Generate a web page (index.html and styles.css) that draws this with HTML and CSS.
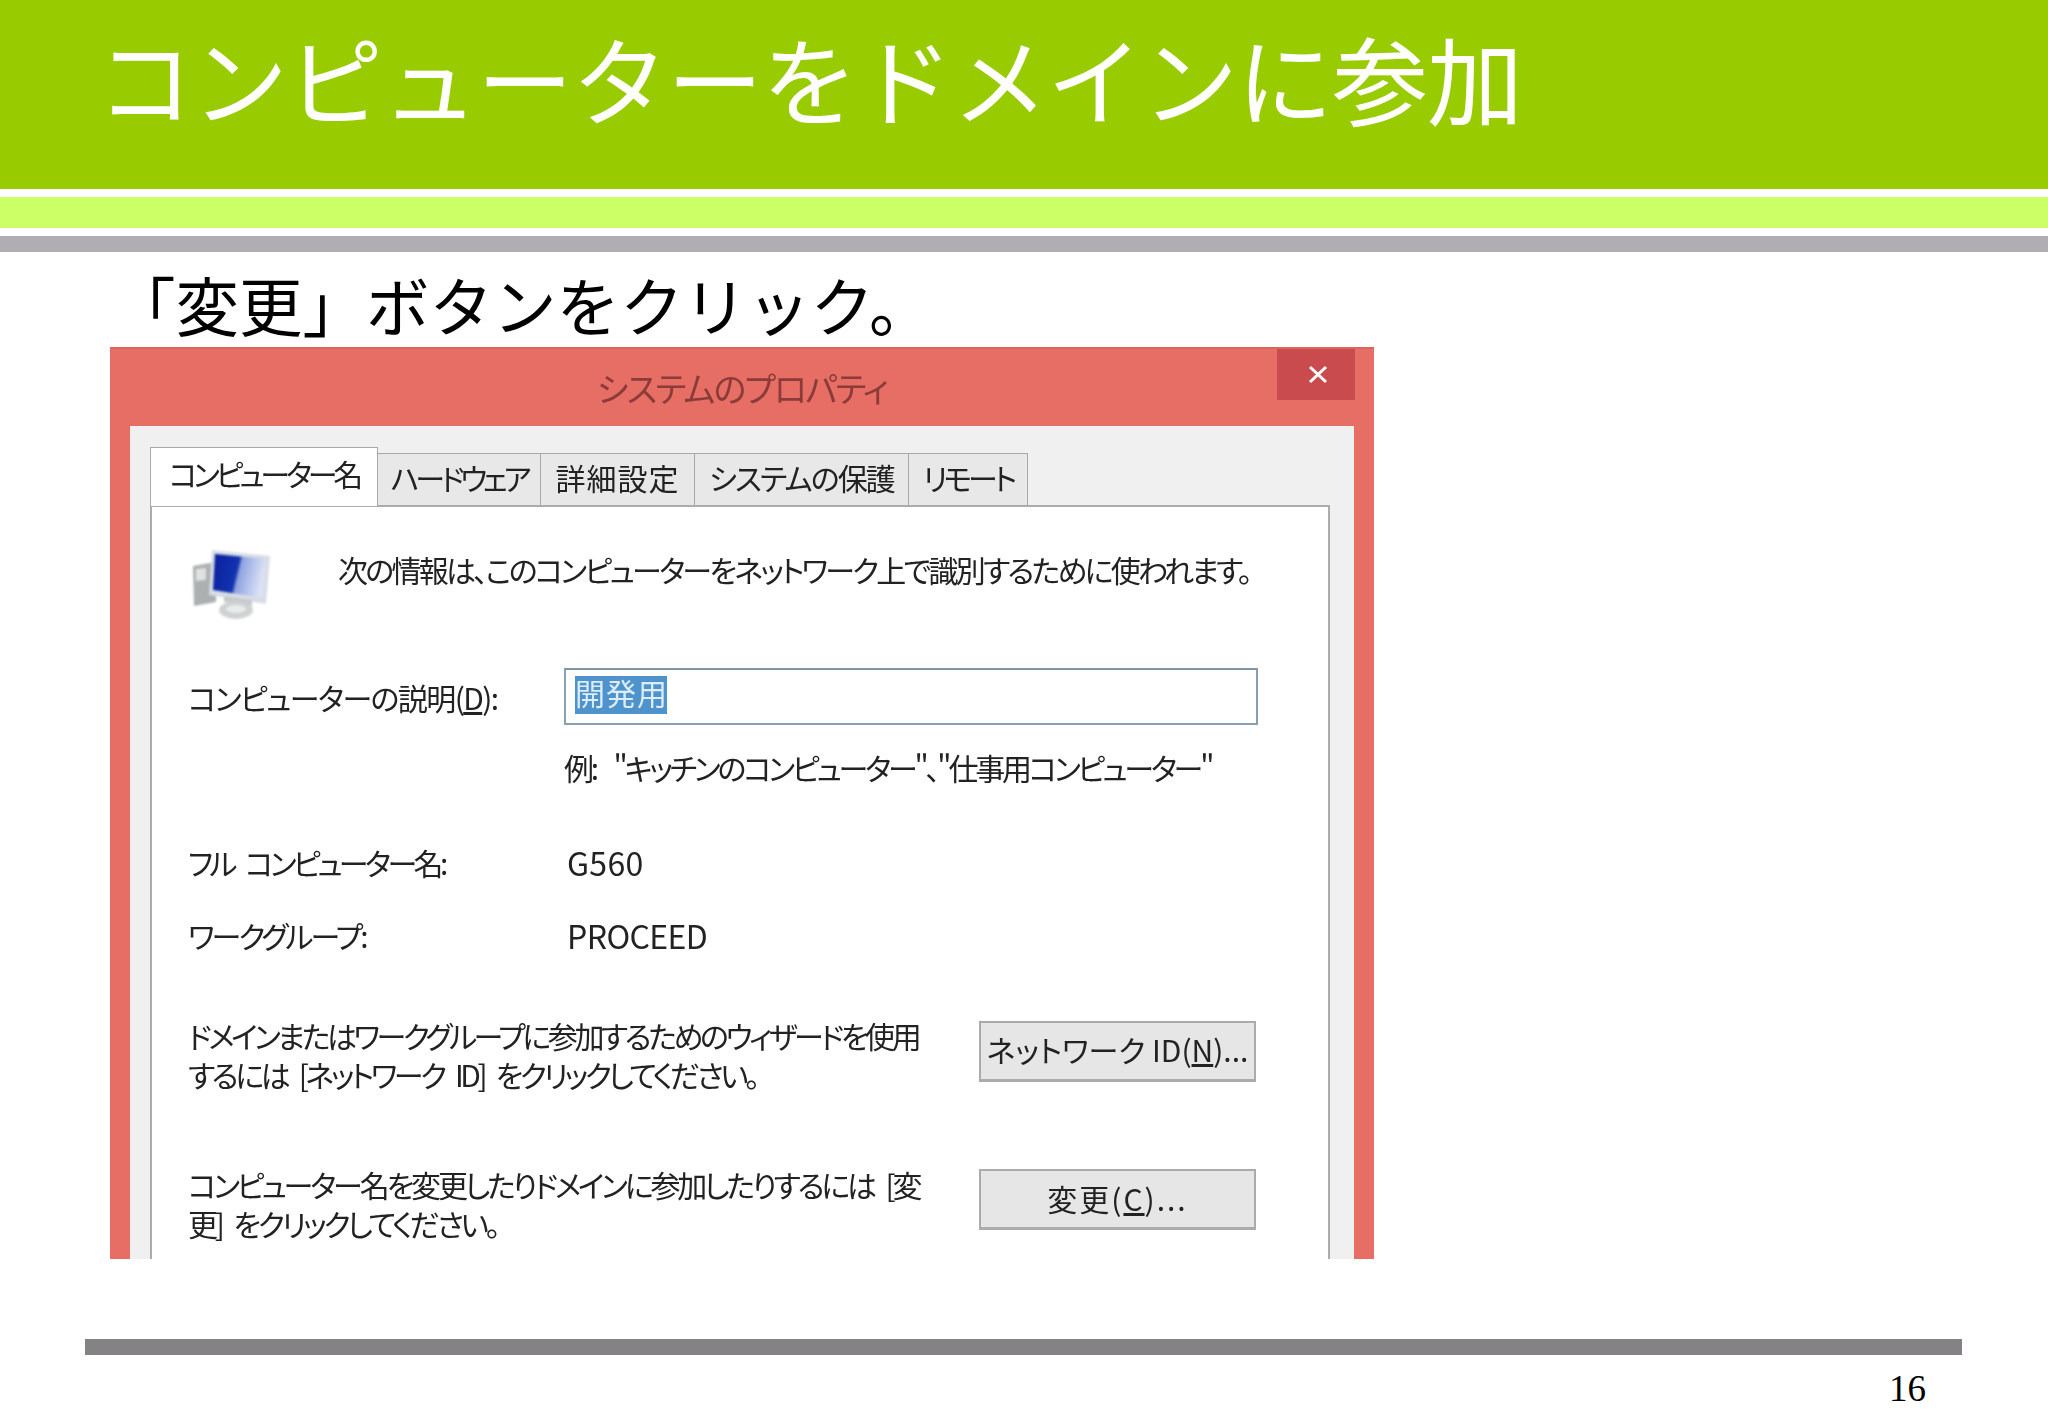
FILE: index.html
```html
<!DOCTYPE html>
<html lang="ja">
<head>
<meta charset="utf-8">
<title>コンピューターをドメインに参加</title>
<link rel="stylesheet" href="styles.css">
</head>
<body>
<div class="slide">
  <header class="head">
    <h1 class="title">コンピューターをドメインに参加</h1>
    <div class="band-light"></div>
    <div class="band-gray"></div>
  </header>
  <p class="lead">「変更」ボタンをクリック。</p>
  <div class="window">
    <div class="titlebar">
      <span class="wintitle">システムのプロパティ</span>
      <span class="close"><svg width="24" height="20" viewBox="0 0 24 20"><path d="M4 2 L20 17 M20 2 L4 17" stroke="#fff" stroke-width="3" fill="none"/></svg></span>
    </div>
    <div class="client">
      <div class="tabs">
        <span class="tab tab-active">コンピューター名</span>
        <span class="tab t2">ハードウェア</span>
        <span class="tab t3">詳細設定</span>
        <span class="tab t4">システムの保護</span>
        <span class="tab t5">リモート</span>
      </div>
      <div class="panel">
        <div class="info">
          <svg class="pc" width="78" height="74" viewBox="0 0 78 74">
            <defs>
              <linearGradient id="scr" x1="0" y1="0" x2="1" y2="0.2">
                <stop offset="0" stop-color="#0a1f9c"/>
                <stop offset="0.5" stop-color="#1233b0"/>
                <stop offset="0.56" stop-color="#8fa2e0"/>
                <stop offset="1" stop-color="#dbe2f5"/>
              </linearGradient>
            </defs>
            <polygon points="1,18 24,14 24,54 2,58" fill="#acb0b0"/>
            <polygon points="4,21 14,20 14,32 4,33" fill="#dfe2e0"/>
            <polygon points="20,2 78,8 74,56 17,47" fill="#d8dce6"/>
            <polygon points="23,6 74,11 71,50 21,42" fill="url(#scr)"/>
            <polygon points="32,48 60,52 60,58 32,54" fill="#c6c9cc"/>
            <ellipse cx="44" cy="62" rx="17" ry="9" fill="#cfd2d3"/>
            <ellipse cx="44" cy="61" rx="10" ry="4" fill="#e9ebeb"/>
          </svg>
          <span class="info-text">次の情報は、このコンピューターをネットワーク上で識別するために使われます。</span>
        </div>
        <div class="row desc">
          <span class="label l-desc">コンピューターの説明(<u>D</u>):</span>
          <div class="input"><span class="sel">開発用</span></div>
        </div>
        <div class="row hint">
          <span></span>
          <span class="hint-text">例: "キッチンのコンピューター"、"仕事用コンピューター"</span>
        </div>
        <div class="row full">
          <span class="label l-full">フル コンピューター名:</span>
          <span class="value">G560</span>
        </div>
        <div class="row group">
          <span class="label l-group">ワークグループ:</span>
          <span class="value v-group">PROCEED</span>
        </div>
        <div class="action a1">
          <p class="para p1">ドメインまたはワークグループに参加するためのウィザードを使用<br>するには [ネットワーク ID] をクリックしてください。</p>
          <span class="btn b1">ネットワーク ID(<u>N</u>)...</span>
        </div>
        <div class="action a2">
          <p class="para p2">コンピューター名を変更したりドメインに参加したりするには [変<br>更] をクリックしてください。</p>
          <span class="btn b2">変更(<u>C</u>)...</span>
        </div>
      </div>
    </div>
  </div>
  <footer class="foot">
    <div class="foot-bar"></div>
    <div class="page">16</div>
  </footer>
</div>
</body>
</html>
```
FILE: styles.css
```css
* { box-sizing: border-box; }
html, body { margin: 0; padding: 0; background: #fff; }
body { font-family: "Noto Sans CJK JP", sans-serif; }
.slide { width: 2048px; height: 1418px; overflow: hidden; display: flex; flex-direction: column; }

.head { height: 252px; display: flex; flex-direction: column; }
.title {
  margin: 0; height: 189px; background: #99cc00; color: #fff;
  font-size: 96px; font-weight: 400; line-height: 154px; padding-left: 97px; white-space: nowrap; letter-spacing: -1px;
}
.band-light { height: 31px; margin-top: 8px; background: #ccff66; }
.band-gray { height: 16px; margin-top: 8px; background: #b0aeb2; }

.lead { margin: 0; height: 95px; padding-left: 112px; font-size: 63.5px; line-height: 103px; color: #000; white-space: nowrap; }

.window {
  margin-left: 110px; width: 1264px; height: 912px; flex: none; overflow: hidden;
  background: #e66e64; border-top: 2px solid #d9665e; padding: 0 20px 0 20px; filter: blur(0.6px);
  display: flex; flex-direction: column;
}
.titlebar { height: 77px; flex: none; display: flex; justify-content: center; position: relative; }
.wintitle { font-size: 34px; line-height: 77px; color: #8b3b38; font-feature-settings: "palt"; letter-spacing: -1.8px; }
.close { position: absolute; right: -1px; top: 0; width: 78px; height: 51px; padding: 0 0 0 3px; background: #c94b4e; display: flex; align-items: center; justify-content: center; }

.client { flex: 1; background: #f0f0f0; padding: 21px 24px 0 20px; display: flex; flex-direction: column; }
.tabs { height: 58px; display: flex; align-items: flex-end; flex: none; position: relative; }
.tab {
  height: 52px; border: 1px solid #a9a9a9; border-bottom: 0; border-left: 0; background: #e8e8e8; color: #222;
  font-size: 30px; line-height: 46px; text-align: center; white-space: nowrap;
  font-feature-settings: "palt";
}
.tab-active { width: 228px; line-height: 50px; background: #fff; border-left: 1px solid #a9a9a9; position: relative; z-index: 1; margin-bottom: -1px; height: 59px; letter-spacing: -4.2px; }
.t2 { width: 163px; letter-spacing: -4.2px; }
.t3 { width: 154px; letter-spacing: 1px; }
.t4 { width: 214px; letter-spacing: -1.9px; }
.t5 { width: 119px; letter-spacing: -3.9px; }

.panel { flex: 1; background: #fff; border: 2px solid #a9adb0; border-bottom: 0; padding: 0 0 0 36px; color: #222; font-size: 30px; font-feature-settings: "palt"; }
.info { display: flex; gap: 68px; padding: 41px 0 0 4px; height: 115px; }
.pc { flex: none; filter: blur(0.8px); }
.info-text { line-height: 42px; white-space: nowrap; letter-spacing: -2.75px; }

.row { display: grid; grid-template-columns: 376px 1fr; align-items: center; white-space: nowrap; }
.desc { margin-top: 46px; height: 57px; }
.l-desc { letter-spacing: -1.6px; }
.input { width: 694px; height: 57px; border: 2px solid #8aa0b2; border-top-color: #8295a5; padding: 6px 9px; background: #fff; }
.sel { display: inline-block; width: 92px; height: 38px; line-height: 32px; background: #4f93cc; color: #dcecf8; letter-spacing: 1px; vertical-align: top; }
.hint { margin-top: 20px; height: 40px; }
.hint-text { letter-spacing: -3.2px; word-spacing: 14px; }
.full { margin-top: 54px; height: 40px; }
.l-full { letter-spacing: -3.6px; word-spacing: 8px; }
.group { margin-top: 33px; height: 40px; }
.l-group { letter-spacing: -2.9px; }
.value { margin-left: 3px; font-size: 32px; letter-spacing: 0.3px; }
.v-group { letter-spacing: -0.6px; }

.action { display: grid; grid-template-columns: 791px 277px; white-space: nowrap; }
.a1 { margin-top: 64px; }
.a2 { margin-top: 71px; }
.para { margin: 0; line-height: 39px; word-spacing: 8px; }
.p1 { letter-spacing: -3.4px; }
.p2 { letter-spacing: -3.15px; }
.btn {
  height: 61px; margin-top: 5px; border: 2px solid #ababab; border-bottom-width: 3px;
  background: #e6e6e6; text-align: center; line-height: 52px; color: #222;
}
.b2 { margin-top: 4px; line-height: 54px; letter-spacing: 2px; }

.foot { margin: 80px 86px 0 85px; flex: none; }
.foot-bar { height: 16px; background: #848284; }
.page { font-family: "Liberation Serif", serif; font-size: 37px; line-height: 40px; margin-top: 14px; padding-right: 36px; text-align: right; color: #000; }
```
